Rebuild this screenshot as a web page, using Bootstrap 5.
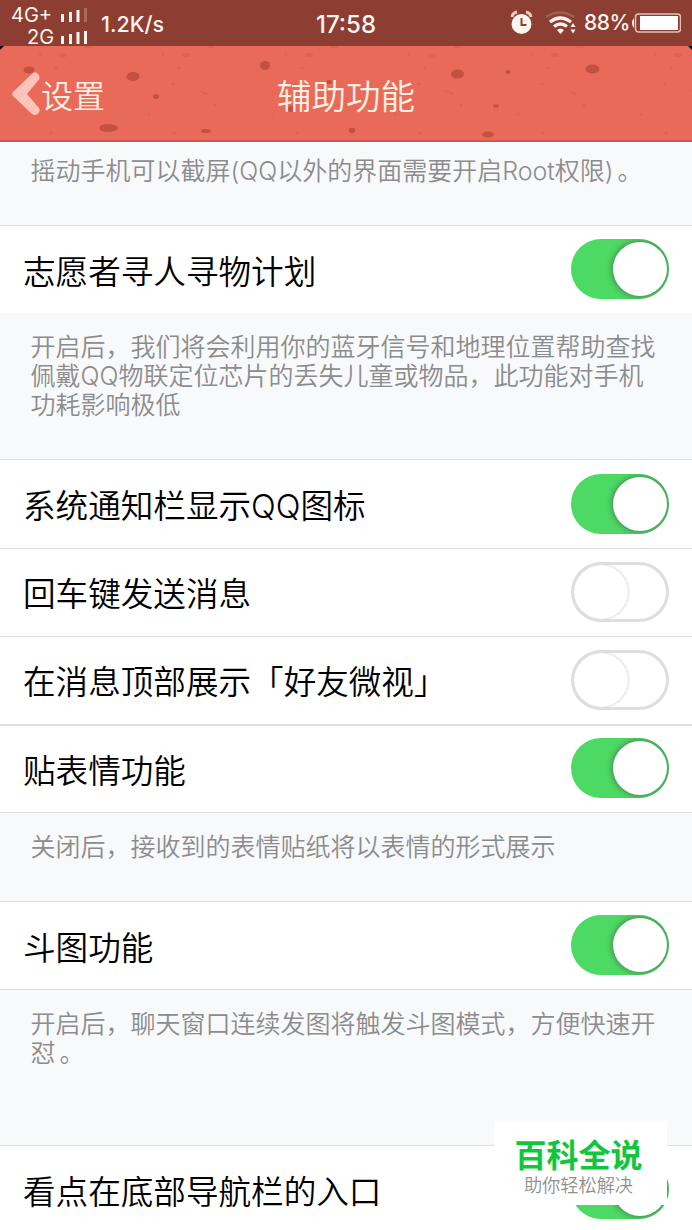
<!DOCTYPE html>
<html lang="zh-CN">
<head>
<meta charset="utf-8">
<meta name="viewport" content="width=device-width, initial-scale=1">
<title>辅助功能</title>
<link href="https://cdn.jsdelivr.net/npm/bootstrap@5.3.0/dist/css/bootstrap.min.css" rel="stylesheet">
<style>
body{font-family:Inter,"Noto Sans CJK SC",sans-serif;background:#f8f9fb;height:1230px;overflow:hidden;color:#000}
.statusbar{height:46px;background:#8b3e31;color:#fff5ee;font-family:Inter,sans-serif;line-height:22px}
.sim{width:90px;font-size:20px;padding-left:11px;padding-top:4px}
.simline{width:78px;height:22px}
.titlebar{height:96px;background:#e96a58;border-bottom:2px solid #c95a52;color:#fff0e6;line-height:48px}
.titlebar .holes{left:0;top:0}
.back{left:11px;top:23px;font-size:32px;font-weight:350}
.back span{padding-top:4px}
.title{font-size:34.5px;font-weight:350;padding-top:27px}
.setting{height:88.4px;padding:0 23px;font-size:32.6px;font-weight:350;line-height:48px;background:#fff;border-top:1px solid #dedfe1}
.label{padding-top:4px}
.hint{padding:0 30.5px;font-size:25px;line-height:29px;font-weight:350;color:#8c8c8c;background:#f8f9fb;white-space:nowrap}
.ruled{border-top:1px solid #dedfe1}
.toggle{width:98px;height:60px;border-radius:30px;border:3px solid #dedede;background:#fff;flex:none;overflow:hidden;margin-bottom:1px}
.toggle::after{content:"";display:block;width:54px;height:54px;border-radius:50%;background:#fff;box-shadow:0 0 3px rgba(0,0,0,.28)}
.toggle.on{background:#4cd964;border-width:0;padding:3px}
.toggle.on::after{margin-left:38.5px;box-shadow:0 0 5px 2px rgba(70,110,80,.6)}
.stamp{right:25px;top:1121px;width:173px;height:84px;background:#fff;z-index:2}
.stampname{font-size:32px;line-height:36px;font-weight:700;color:#10c63c;padding-top:17px;padding-right:4px}
.stampsub{font-size:18.2px;line-height:24px;color:#909090;font-weight:350;margin-top:-1px;padding-right:4px}
</style>
<script src="https://cdn.jsdelivr.net/npm/bootstrap@5.3.0/dist/js/bootstrap.bundle.min.js"></script>
</head>
<body class="position-relative">
<header>
  <div class="statusbar d-flex position-relative">
    <div class="sim">
      <div class="simline d-flex justify-content-between"><span>4G+</span>
        <svg width="28" height="22" fill="#fff5ee"><path d="M0 10h3v8H0zM8 8h3v10H8zM15.500 6h3v12h-3z"/><path opacity=".25" d="M23 4h3v14h-3z"/></svg></div>
      <div class="simline d-flex justify-content-between"><span class="ps-3">2G</span>
        <svg width="28" height="22" fill="#fff5ee"><path d="M0 10h3v8H0zM8 8h3v10H8zM15.500 6h3v12h-3zM23 5h3v13h-3z"/></svg></div>
    </div>
    <div style="padding:13px 0 0 11px;font-size:21.5px;font-weight:450">1.2K/s</div>
    <div class="position-absolute w-100 text-center" style="top:14px;font-size:24px;font-weight:500">17:58</div>
    <div class="ms-auto d-flex align-items-center">
      <svg width="24" height="26" viewBox="0 0 24 26" style="margin-right:3px"><circle cx="11.500" cy="14" r="10" fill="#fff5ee"/><path d="M2 7a6 6 0 0 1 5-5M16 2a6 6 0 0 1 5 5" stroke="#ecc9bd" stroke-width="3" fill="none"/><path d="M11.500 8v7h5" stroke="#8b3e31" stroke-width="2" fill="none"/></svg>
      <svg width="32" height="26" viewBox="0 0 32 26" style="margin-left:8px;margin-right:2px" fill="none" stroke="#fff5ee"><path d="M1 7q14-9 28 0" stroke="#a3604f" stroke-width="2.500"/><path d="M5 12q10-8 21 0M9 16.500q6.500-5 13 0" stroke-width="3.200"/><path d="M12 20q3.500-3 7 0l-3.500 4zM25.500 17l2.500-4 2.500 4zM25.500 19.500l2.500 4 2.500-4z" fill="#fff5ee" stroke="none"/></svg>
      <span style="margin-left:5px;font-size:21px;width:46px;letter-spacing:-.5px;font-weight:450">88%</span>
      <svg width="50" height="20" viewBox="0 0 50 20" style="margin:0 11px 0 1px"><path d="M3 5v10q-4-5 0-10z" fill="#fff5ee"/><rect x="4.500" y="1" width="45" height="18" rx="3" fill="none" stroke="#e6c0b4" stroke-width="1.500"/><path d="M9 3h38v14H9z" fill="#fff"/></svg>
    </div>
  </div>
  <div class="titlebar position-relative text-center">
    <svg class="holes position-absolute" width="692" height="94" viewBox="0 46 692 94">
      <defs><pattern id="grain" width="123" height="94" patternUnits="userSpaceOnUse" y="46"><g fill="#b74335" opacity=".2"><ellipse cx="63" cy="9" rx="4" ry="2"/><ellipse cx="56" cy="22" rx="2" ry="1.500"/><ellipse cx="50" cy="38" rx="2" ry="1.500"/><circle cx="92" cy="59" r="1.500"/><circle cx="51" cy="87" r="1.500"/><ellipse cx="88" cy="1" rx="4" ry="1"/><path d="M73 43l12 4-2 2zM38 5l3 2v6zM24 69l3-2v3z"/></g></pattern></defs>
      <rect y="46" width="692" height="94" fill="url(#grain)"/>
      <g fill="#c25142"><ellipse cx="29" cy="70" rx="5.500" ry="3.500"/><ellipse cx="133" cy="76.500" rx="6.500" ry="4.500"/><ellipse cx="156" cy="96.500" rx="3" ry="2.500"/><ellipse cx="108.500" cy="128" rx="9.500" ry="4"/><ellipse cx="206" cy="131" rx="5" ry="2"/><ellipse cx="265" cy="65.500" rx="5" ry="4.500"/><ellipse cx="457.500" cy="74" rx="6.500" ry="4.500"/><ellipse cx="508" cy="72" rx="2.500" ry="2"/><ellipse cx="592.500" cy="69" rx="7" ry="4.500"/><ellipse cx="496" cy="106" rx="3" ry="1.800"/><ellipse cx="488" cy="134.500" rx="6" ry="3"/><ellipse cx="352" cy="130.500" rx="3.300" ry="2.700"/><ellipse cx="291" cy="109" rx="4" ry="3"/><ellipse cx="329" cy="82" rx="3" ry="2"/></g>
      <path d="M0 46h4l-4 4zM692 46h-4l4 4z" fill="#160504"/>
    </svg>
    <div class="back position-absolute d-flex align-items-center">
      <svg width="30" height="48" viewBox="0 0 30 48"><path d="M20.500 3.200Q24-.5 27 3t.5 6L16 23l11.500 13.500q2.500 3-.5 6t-6.500 0L2 25q-1.500-2 0-4z" fill="#ffc4b9"/></svg>
      <span>设置</span>
    </div>
    <div class="title position-relative">辅助功能</div>
  </div>
</header>
<main>
  <div class="hint" style="height:83px;padding-top:15px">摇动手机可以截屏(QQ以外的界面需要开启Root权限)<span class="ms-1">。</span></div>
  <div class="setting d-flex align-items-center justify-content-between"><span class="label">志愿者寻人寻物计划</span><span class="toggle on"></span></div>
  <div class="hint" style="height:146px;padding-top:20px">开启后，我们将会利用你的蓝牙信号和地理位置帮助查找<br>佩戴QQ物联定位芯片的丢失儿童或物品，此功能对手机<br>功耗影响极低</div>
  <div class="setting d-flex align-items-center justify-content-between"><span class="label">系统通知栏显示QQ图标</span><span class="toggle on"></span></div>
  <div class="setting d-flex align-items-center justify-content-between"><span class="label">回车键发送消息</span><span class="toggle"></span></div>
  <div class="setting d-flex align-items-center justify-content-between" style="height:87.4px"><span class="label">在消息顶部展示「好友微视」</span><span class="toggle"></span></div>
  <div class="setting d-flex align-items-center justify-content-between" style="border-top-width:2px"><span class="label">贴表情功能</span><span class="toggle on"></span></div>
  <div class="hint ruled" style="height:89px;padding-top:20px">关闭后，接收到的表情贴纸将以表情的形式展示</div>
  <div class="setting d-flex align-items-center justify-content-between"><span class="label">斗图功能</span><span class="toggle on"></span></div>
  <div class="hint ruled" style="height:155.500px;padding-top:20px">开启后，聊天窗口连续发图将触发斗图模式，方便快速开<br>怼<span class="ms-1">。</span></div>
  <div class="setting d-flex align-items-center justify-content-between"><span class="label">看点在底部导航栏的入口</span><span class="toggle on"></span></div>
</main>
<aside class="stamp position-absolute text-center"><div class="stampname">百科全说</div><div class="stampsub">助你轻松解决</div></aside>
</body>
</html>
